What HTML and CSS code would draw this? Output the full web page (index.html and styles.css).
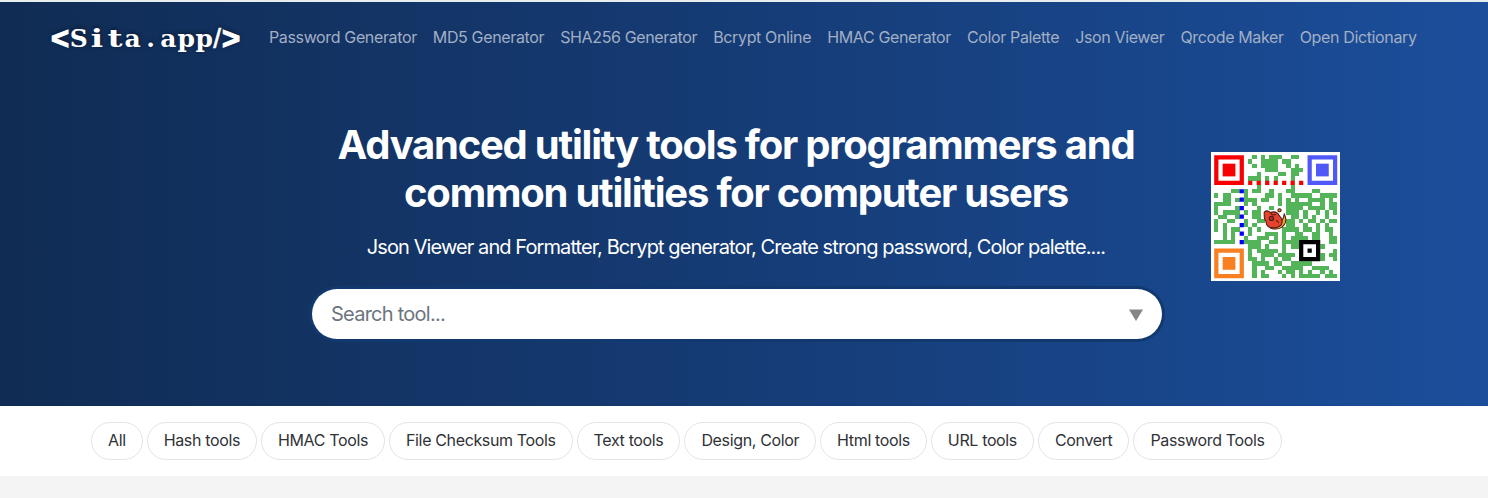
FILE: index.html
```html
<!DOCTYPE html>
<html lang="en">
<head>
<meta charset="utf-8">
<title>Sita.app</title>
<link rel="stylesheet" href="styles.css">
</head>
<body>
<header class="hero">
  <nav class="nav">
    <a class="logo"><b class="angle">&lt;</b><span>S</span><span>i</span><span>t</span><span>a</span><span>.</span><span>a</span><span>p</span><span>p</span><b class="slash">/</b><b class="angle">&gt;</b></a>
    <div class="links">
      <a>Password Generator</a><a>MD5 Generator</a><a>SHA256 Generator</a><a>Bcrypt Online</a><a>HMAC Generator</a><a>Color Palette</a><a>Json Viewer</a><a>Qrcode Maker</a><a>Open Dictionary</a>
    </div>
  </nav>
  <div class="main">
    <div class="intro">
      <h1>Advanced utility tools for programmers and<br>common utilities for computer users</h1>
      <p>Json Viewer and Formatter, Bcrypt generator, Create strong password, Color palette....</p>
      <div class="search"><span>Search tool...</span><svg width="14" height="12" viewBox="0 0 14 12"><path d="M0 .5h14L7 12z" fill="#858585"/></svg></div>
    </div>
    <svg class="qr" viewBox="-.75 -.75 30.4 30.4">
      <rect x="-.75" y="-.75" width="30.4" height="30.4" fill="#fff"/>
      <path id="modules" fill="#53b45a" shape-rendering="crispEdges"/>
      <path d="M.5.5h6v6h-6z" fill="none" stroke="#f80000"/><path d="M2 2h3v3H2z" fill="#f80000"/>
      <path d="M22.5.5h6v6h-6z" fill="none" stroke="#5058f8"/><path d="M24 2h3v3h-3z" fill="#5058f8"/>
      <path d="M.5 22.5h6v6h-6z" fill="none" stroke="#f88020"/><path d="M2 24h3v3H2z" fill="#f88020"/>
      <path d="M8 6.5h13" stroke="#f80000" stroke-dasharray="1 1"/>
      <path d="M6.5 8v13" stroke="#00f" stroke-dasharray="1 1"/>
      <path d="M20 20h5v5h-5z" fill="#fff"/><path d="M20.5 20.5h4v4h-4z" fill="none" stroke="#000"/><path d="M22 22h1v1h-1z"/>
      <g stroke="#4a1b12" stroke-width=".25" stroke-linejoin="round">
        <path d="M14.9 16.1q1.4-.3 1.6-2.3q1 2-.6 3.2q-1 .7-2.6.2z" fill="#f5a32b"/>
        <path d="M11.8 13.4q.7-.6 1.4.1q1.5-.5 2.1.7q1.1 1.1.5 2.2q-1 .9-2.4.7q-1.1-.2-1.2-1.5q-.5-.4-.4-2.2z" fill="#e5432d"/>
        <circle cx="13.5" cy="14.9" r=".5" fill="#b52d20"/>
        <path d="M13.2 13.5l.5.6.9-.1M14.6 15.3l.6.6" fill="none"/>
        <circle cx="15.4" cy="13" r=".38" fill="#d88b2b"/>
      </g>
    </svg>
  </div>
</header>
<div class="filters">
  <a>All</a><a>Hash tools</a><a>HMAC Tools</a><a>File Checksum Tools</a><a>Text tools</a><a>Design, Color</a><a>Html tools</a><a>URL tools</a><a>Convert</a><a>Password Tools</a>
</div>
<script src="qr.js"></script>
</body>
</html>
```
FILE: styles.css
```css
* { box-sizing: border-box; }
body { margin: 0; background: #f4f4f4; font-family: Inter, "Liberation Sans", sans-serif; font-size: 16px; line-height: 24px; color: #303236; overflow: hidden; }
.hero { height: 406px; border-top: 2px solid #e8eeee; background: linear-gradient(90deg, #102c54 0%, #153a72 45%, #1b4e9b 100%); }
.nav { display: flex; align-items: center; height: 70px; padding-left: 51px; }
.logo { display: flex; align-items: center; width: 190px; margin-right: 28px; padding-top: 4px; color: #fff; font: bold 25px/34px "DejaVu Serif", serif; text-shadow: 0 -1px 4px #0008; }
.logo span { width: 18px; display: flex; justify-content: center; }
.logo span:nth-of-type(2), .logo span:nth-of-type(3) { transform: scaleX(1.3); }
.logo .angle { width: 19px; font: bold 31px/30px "Liberation Sans", sans-serif; -webkit-text-stroke: 1.2px #fff; }
.logo .slash { width: 9px; font: 28px/34px "Liberation Sans", sans-serif; -webkit-text-stroke: .6px #fff; }
.links { display: flex; gap: 16px; color: #a2afc5; white-space: nowrap; letter-spacing: -.36px; }
.main { display: flex; padding-left: 312px; }
.intro { width: 850px; padding-top: 49px; text-align: center; color: #fff; }
h1 { margin: 0; padding-right: 2px; font-size: 40px; line-height: 48px; font-weight: 700; letter-spacing: -1.23px; white-space: nowrap; }
p { margin: 15px 0 0; padding-right: 2px; font-size: 20px; line-height: 30px; letter-spacing: -.91px; white-space: nowrap; }
.search { display: flex; align-items: center; justify-content: space-between; height: 50px; margin-top: 27px; padding: 0 19px; border-radius: 25px; background: #fff; box-shadow: 0 0 0 3px #12396e; color: #6c757d; font-size: 20px; letter-spacing: -.75px; }
.search svg { position: relative; top: 1px; }
.qr { width: 129px; height: 129px; margin: 80px 0 0 49px; }
.filters { display: flex; gap: 4px; height: 70px; padding: 16px 0 0 91px; background: #fff; box-shadow: 0 1px 3px #0002; white-space: nowrap; letter-spacing: -.36px; }
.filters a { height: 38px; padding: 5px 16px; border: 1px solid #e3e4e6; border-radius: 19px; }
```
FILE: qr.js
```js
// One string per module row; '#' marks a filled module.
const rows = [
  ".........#.#.###..##.........",
  "........#..####.##...........",
  ".........#.####..#.#.........",
  "............###...###........",
  "..........#....##.##.........",
  "........###.#.#...#..........",
  ".............................",
  "..........#.......#..........",
  "....##.#.##..#...##....##....",
  "#.##...#....##.#..#####..####",
  "..##.#.###.##..#.#.#..####.#.",
  "####...#.#.....#.######..#.##",
  "#....#....#..#...####.####.##",
  "#.####.#.##......###.#..#.#.#",
  ".##..#...##.......##.#.#..#..",
  "#..##..#..##.....##.#.##.#.##",
  "#.#....#.#.......##..#..#.#..",
  "#.#.##..#.#.....####.##.#.##.",
  "..#.#...#...###.#..##..##..#.",
  "..#.#..#..###.#.#.####.##..##",
  "#####..####..##.####.......##",
  "........###.#...#.##.....#...",
  "........#.#####.#...........#",
  "........#..###.####......#.##",
  "........##.#..#.##.......#..#",
  ".........####.##..#####......",
  ".........#..##..#####..####..",
  ".........#.#...#.##.#.#..#.#.",
  ".........#.##...#.#.#####.###"
];
document.getElementById("modules").setAttribute("d", rows.map((row, y) =>
  [...row].map((c, x) => c === "#" ? `M${x} ${y}h1v1h-1z` : "").join("")
).join(""));
```
